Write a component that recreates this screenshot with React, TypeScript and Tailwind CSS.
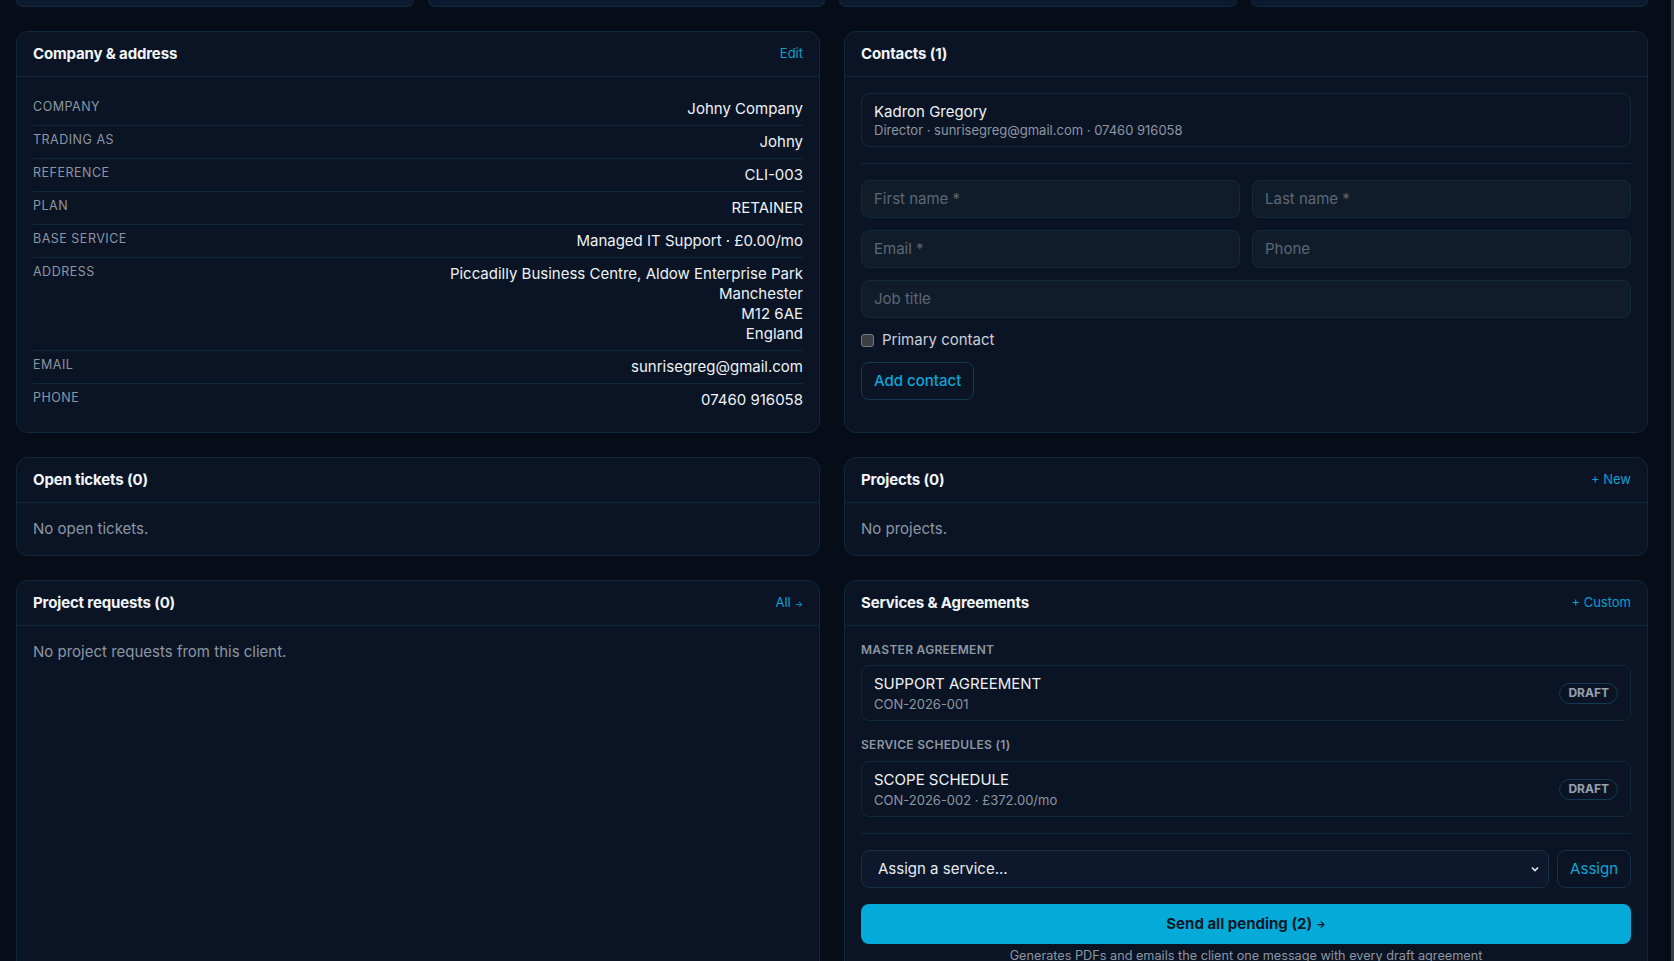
import React from "react";

const rows: [string, string[]][] = [
  ["Company", ["Johny Company"]],
  ["Trading as", ["Johny"]],
  ["Reference", ["CLI-003"]],
  ["Plan", ["RETAINER"]],
  ["Base service", ["Managed IT Support · £0.00/mo"]],
  [
    "Address",
    [
      "Piccadilly Business Centre, Aldow Enterprise Park",
      "Manchester",
      "M12 6AE",
      "England",
    ],
  ],
  ["Email", ["sunrisegreg@gmail.com"]],
  ["Phone", ["07460 916058"]],
];

function Card({
  title,
  action,
  children,
}: {
  title: string;
  action?: React.ReactNode;
  children: React.ReactNode;
}) {
  return (
    <div className="flex flex-col rounded-xl border border-[#11283a] bg-[#0a1425]">
      <div className="flex h-[45px] items-center justify-between border-b border-[#11283a] px-4">
        <h3 className="text-[15px] font-bold leading-5 tracking-[-0.01em] text-[#f1f5f9]">{title}</h3>
        {action}
      </div>
      <div className="flex-1 p-4">{children}</div>
    </div>
  );
}

function LinkText({ children }: { children: React.ReactNode }) {
  return <span className="text-[13px] text-[#0e9fcd]">{children}</span>;
}

function Field({ placeholder }: { placeholder: string }) {
  return (
    <div className="rounded-lg border border-[#13293d] bg-[#111c2b] px-3 py-2 text-[15px] leading-5 text-[#5c6776]">
      {placeholder}
    </div>
  );
}

function Agreement({ title, sub }: { title: string; sub: string }) {
  return (
    <div className="flex items-center justify-between rounded-lg border border-[#11283a] px-3 py-2">
      <div>
        <div className="text-[15px] leading-5 text-[#eef2f6]">{title}</div>
        <div className="mt-0.5 text-[13px] leading-4 text-[#8d96a3]">{sub}</div>
      </div>
      <span className="flex h-[21px] items-center rounded-full border border-[#123a52] px-2 text-[12px] font-bold text-[#97a1ad]">
        DRAFT
      </span>
    </div>
  );
}

export default function App() {
  return (
    <div className="flex h-screen overflow-hidden bg-[#070d18] font-['Inter',sans-serif]">
      <div className="flex-1 overflow-hidden pl-4 pr-[23px]">
        <div className="grid h-[7px] grid-cols-4 gap-[14px]">
          {[0, 1, 2, 3].map((i) => (
            <div key={i} className="rounded-b-xl border border-t-0 border-[#13283d] bg-[#0c1a30]" />
          ))}
        </div>

        <div className="mt-6 grid grid-cols-2 gap-6">
          <Card title="Company & address" action={<LinkText>Edit</LinkText>}>
            <div>
              {rows.map(([label, values], i) => (
                <div
                  key={label}
                  className={`flex items-start justify-between py-1.5 ${
                    i < rows.length - 1 ? "border-b border-[#11283a]" : ""
                  }`}
                >
                  <span className="text-[12.5px] uppercase leading-4 tracking-[0.04em] text-[#8d96a3]">
                    {label}
                  </span>
                  <div className="text-right text-[15px] leading-5 text-[#eef2f6]">
                    {values.map((v) => (
                      <div key={v}>{v}</div>
                    ))}
                  </div>
                </div>
              ))}
            </div>
          </Card>

          <Card title="Contacts (1)">
            <div className="rounded-lg border border-[#11283a] px-3 py-2">
              <div className="text-[15px] leading-5 text-[#eef2f6]">Kadron Gregory</div>
              <div className="text-[13px] leading-4 text-[#8d96a3]">
                Director · sunrisegreg@gmail.com · 07460 916058
              </div>
            </div>
            <div className="mt-4 space-y-3 border-t border-[#11283a] pt-4">
              <div className="grid grid-cols-2 gap-3">
                <Field placeholder="First name *" />
                <Field placeholder="Last name *" />
              </div>
              <div className="grid grid-cols-2 gap-3">
                <Field placeholder="Email *" />
                <Field placeholder="Phone" />
              </div>
              <Field placeholder="Job title" />
              <div className="flex h-5 items-center gap-2">
                <span className="h-[13px] w-[13px] rounded-[3px] border border-[#767b82] bg-[#3b3e43]" />
                <span className="text-[15px] text-[#c9d0d8]">Primary contact</span>
              </div>
              <button className="rounded-lg border border-[#123a52] px-3 py-2 text-[15px] font-medium leading-5 text-[#0ea5d6]">
                Add contact
              </button>
            </div>
          </Card>

          <Card title="Open tickets (0)">
            <p className="text-[15px] leading-5 text-[#8d96a3]">No open tickets.</p>
          </Card>

          <Card title="Projects (0)" action={<LinkText>+ New</LinkText>}>
            <p className="text-[15px] leading-5 text-[#8d96a3]">No projects.</p>
          </Card>

          <Card
            title="Project requests (0)"
            action={
              <LinkText>
                All <span className="text-[9px]">→</span>
              </LinkText>
            }
          >
            <p className="text-[15px] leading-5 text-[#8d96a3]">No project requests from this client.</p>
          </Card>

          <Card title="Services & Agreements" action={<LinkText>+ Custom</LinkText>}>
            <div className="mb-[7px] text-[12px] font-semibold uppercase leading-4 tracking-wide text-[#8d96a3]">
              Master agreement
            </div>
            <Agreement title="SUPPORT AGREEMENT" sub="CON-2026-001" />
            <div className="mb-2 mt-4 text-[12px] font-semibold uppercase leading-4 tracking-wide text-[#8d96a3]">
              Service schedules (1)
            </div>
            <Agreement title="SCOPE SCHEDULE" sub="CON-2026-002 · £372.00/mo" />
            <div className="mt-4 border-t border-[#11283a] pt-4">
              <div className="flex gap-2">
                <div className="flex flex-1 items-center justify-between rounded-lg border border-[#163048] bg-[#0d182c] py-2 pl-4 pr-2 text-[15px] leading-5 text-[#e6ebf0]">
                  <span>Assign a service...</span>
                  <svg width="10" height="10" viewBox="0 0 10 10" fill="none">
                    <path d="M2 3.5 5 6.5 8 3.5" stroke="#e6ebf0" strokeWidth="1.6" />
                  </svg>
                </div>
                <button className="rounded-lg border border-[#163048] px-3 py-2 text-[15px] leading-5 text-[#0ea5d6]">
                  Assign
                </button>
              </div>
              <button className="mt-4 flex h-10 w-full items-center justify-center gap-1 rounded-lg bg-[#05abd8] text-[15px] font-bold text-[#05192a]">
                Send all pending (2) <span className="text-[10px]">→</span>
              </button>
              <p className="mt-1 text-center text-[12.7px] leading-4 text-[#8d96a3]">
                Generates PDFs and emails the client one message with every draft agreement
              </p>
            </div>
          </Card>
        </div>
      </div>
      <div className="w-[3px] bg-[#3c4148]" />
    </div>
  );
}
